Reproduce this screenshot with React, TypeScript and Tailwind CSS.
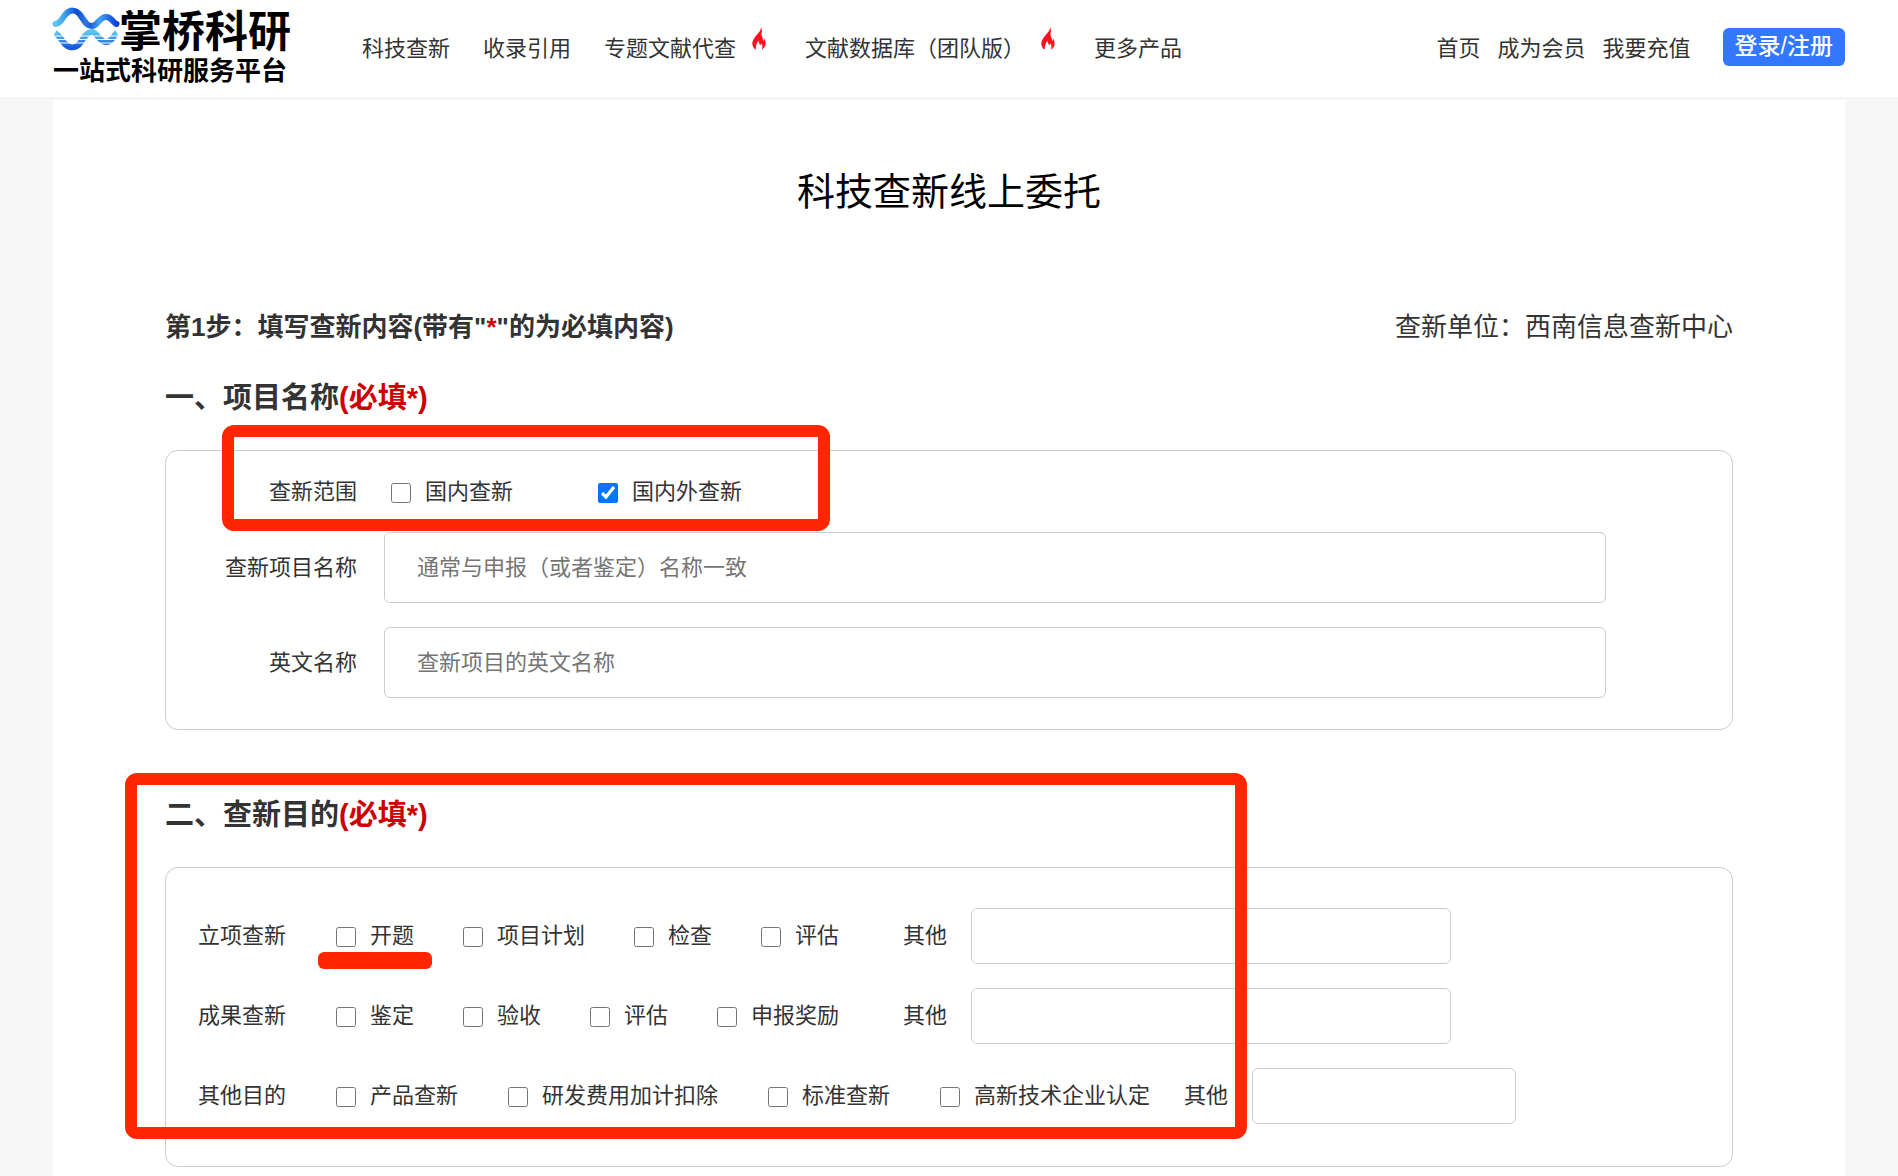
import { useState } from "react";

interface CheckItemProps {
	readonly label: string;
	readonly defaultChecked?: boolean;
	readonly highlighted?: boolean;
}

interface PurposeRow {
	readonly title: string;
	readonly options: Array<string>;
	readonly highlighted?: string;
	readonly compact?: boolean;
}

const navItems = [
	{ label: "科技查新", hot: false },
	{ label: "收录引用", hot: false },
	{ label: "专题文献代查", hot: true },
	{ label: "文献数据库（团队版）", hot: true },
	{ label: "更多产品", hot: false },
];

const purposeRows: Array<PurposeRow> = [
	{ title: "立项查新", options: ["开题", "项目计划", "检查", "评估"], highlighted: "开题" },
	{ title: "成果查新", options: ["鉴定", "验收", "评估", "申报奖励"] },
	{ title: "其他目的", options: ["产品查新", "研发费用加计扣除", "标准查新", "高新技术企业认定"], compact: true },
];

const Flame: React.FC = () => (
	<svg
		viewBox="0 0 14 23"
		className="h-[23px] w-3.5"
		aria-hidden="true"
	>
		<path
			d="M9 0C9.4 4 5 7 2.400 11C1 13 .2 15 .3 17C.5 19.600 1.800 21.500 4 22.600C3.500 20 4.200 17 6.400 13.600C6.600 15.800 7.600 16.600 8 18.200C9 17.600 9.500 17 9.600 16.200C10.800 18.400 10.600 20.600 9.800 22.600C12.400 21.200 13.800 19 13.600 16C13.500 14 12.800 12.800 12.200 11.200C12 13 11.700 13.600 11 14C11.400 10.500 9 9.500 9.600 6.500C9.900 4.500 10.200 2 9 0Z"
			fill="#ff1020"
		/>
	</svg>
);

const LogoMark: React.FC = () => (
	<svg
		viewBox="0 0 66 46"
		className="h-[46px] w-[66px] overflow-visible"
		aria-hidden="true"
	>
		<defs>
			<linearGradient id="wave-top" x1="0" y1="0" x2="1" y2="0">
				<stop offset="0" stopColor="#5ccaf2" />
				<stop offset="0.15" stopColor="#3f9fec" />
				<stop offset="0.35" stopColor="#0b4ad6" />
				<stop offset="0.48" stopColor="#2a74e4" />
				<stop offset="0.58" stopColor="#1c62dc" />
				<stop offset="0.72" stopColor="#45a5ee" />
				<stop offset="1" stopColor="#0a3fd8" />
			</linearGradient>
			<linearGradient id="wave-bottom" x1="0" y1="0" x2="0" y2="1">
				<stop offset="0" stopColor="#5cc8f0" />
				<stop offset="1" stopColor="#1558dc" />
			</linearGradient>
		</defs>
		<path
			d="M2 25C6 27 8 31 11 35C16 41 23 41 28 34C31 29 34 24 39 24C44 24 46 34 53 34C60 34 60 27 64 25"
			fill="none"
			stroke="url(#wave-bottom)"
			strokeWidth="6"
		/>
		<path
			d="M-2 28H68M-2 31.500H68M-2 35H68"
			stroke="#fff"
			strokeWidth="1.200"
		/>
		<path
			d="M2.500 16C8 15 9 10 12 7C17 1 23 1 28 8C32 14 34 18 39 18C45 18 46 9 53 9C59 9 60 15 63.500 16"
			fill="none"
			stroke="url(#wave-top)"
			strokeWidth="6"
			strokeLinecap="round"
		/>
	</svg>
);

const CheckItem: React.FC<CheckItemProps> = ({ label, defaultChecked = false, highlighted = false }) => {
	const [checked, setChecked] = useState(defaultChecked);

	return (
		<label className="relative flex items-center gap-3.5 whitespace-nowrap">
			<input
				type="checkbox"
				checked={checked}
				onChange={(event) => setChecked(event.target.checked)}
				className="mt-0.5 size-5"
			/>
			{label}
			{highlighted && <span className="absolute -inset-x-[18px] top-8 h-[17px] rounded-md bg-[#ff2600]" />}
		</label>
	);
};

const SectionTitle: React.FC<{ readonly children: string }> = ({ children }) => (
	<h2 className="text-[29px] leading-10 font-bold">
		{children}
		<span className="text-[#cc0000]">(必填*)</span>
	</h2>
);

const App: React.FC = () => (
	<div className="flex min-h-screen flex-col bg-[#f7f7f7] font-['Liberation_Sans','Noto_Sans_CJK_SC',sans-serif] text-[22px] leading-8 text-[#333]">
		<header className="flex h-[100px] items-start border-b-[3px] border-[#f5f5f5] bg-white px-[53px] whitespace-nowrap">
			<a
				href="#"
				className="flex w-[309px] flex-col pt-2 font-bold text-black"
			>
				<span className="flex h-12 items-start">
					<LogoMark />
					<span className="text-[43px] leading-[48px]">掌桥科研</span>
				</span>
				<span className="text-[26px] leading-[30px]">一站式科研服务平台</span>
			</a>
			<nav className="flex flex-1 gap-[33px] pt-[33px]">
				{navItems.map((item) => (
					<a
						key={item.label}
						href="#"
						className="flex gap-4"
					>
						{item.label}
						{item.hot && (
							<span className="-mt-1.5 pr-1.5">
								<Flame />
							</span>
						)}
					</a>
				))}
			</nav>
			<div className="flex gap-[17px] pt-[33px]">
				<a href="#">首页</a>
				<a href="#">成为会员</a>
				<a href="#">我要充值</a>
			</div>
			<button
				type="button"
				className="mt-7 ml-8 h-[38px] rounded-md bg-[#3377ff] px-3 pb-0.5 text-[23px] font-medium text-white"
			>
				登录/注册
			</button>
		</header>

		<main className="mx-[53px] flex-1 bg-white px-28 pb-2.5">
			<h1 className="pt-[67px] text-center text-[38px] leading-[50px] text-black">科技查新线上委托</h1>

			<div className="flex items-center justify-between pt-[90px] text-[26px] leading-10">
				<p className="font-bold">
					第1步：填写查新内容(带有"<span className="text-[#cc0000]">*</span>"的为必填内容)
				</p>
				<p>查新单位：西南信息查新中心</p>
			</div>

			<section className="relative pt-[31px]">
				<SectionTitle>一、项目名称</SectionTitle>
				<div className="mt-8 rounded-[13px] border border-[#ccc] pt-6 pr-[126px] pb-[31px]">
					<div className="flex h-[34px] items-center">
						<span className="w-[191px] text-right">查新范围</span>
						<div className="flex gap-[85px] pl-[34px]">
							<CheckItem label="国内查新" />
							<CheckItem
								label="国内外查新"
								defaultChecked
							/>
						</div>
					</div>
					<div className="flex flex-col gap-6 pt-[23px]">
						<label className="flex items-center">
							<span className="w-[191px] text-right">查新项目名称</span>
							<input
								type="text"
								placeholder="通常与申报（或者鉴定）名称一致"
								className="ml-[27px] h-[71px] flex-1 rounded-md border border-[#ccc] px-8 placeholder:text-[#757575]"
							/>
						</label>
						<label className="flex items-center">
							<span className="w-[191px] text-right">英文名称</span>
							<input
								type="text"
								placeholder="查新项目的英文名称"
								className="ml-[27px] h-[71px] flex-1 rounded-md border border-[#ccc] px-8 placeholder:text-[#757575]"
							/>
						</label>
					</div>
				</div>
				<div className="pointer-events-none absolute top-[78px] left-[57px] h-[106px] w-[608px] rounded-xl border-12 border-[#ff2600]" />
			</section>

			<section className="relative pt-[65px]">
				<SectionTitle>二、查新目的</SectionTitle>
				<div className="mt-8 flex flex-col gap-6 rounded-[13px] border border-[#ccc] px-8 pt-10 pb-[42px]">
					{purposeRows.map((row) => (
						<div
							key={row.title}
							className="flex h-14 items-center"
						>
							<span className="w-[138px]">{row.title}</span>
							<div className={row.compact ? "flex gap-[50px]" : "flex gap-[49px]"}>
								{row.options.map((option) => (
									<CheckItem
										key={option}
										label={option}
										highlighted={option === row.highlighted}
									/>
								))}
							</div>
							<label className={row.compact ? "flex items-center pl-[34px]" : "flex items-center pl-16"}>
								其他
								<input
									type="text"
									className={
										row.compact
											? "ml-6 h-14 w-[264px] rounded-md border border-[#ccc] px-4"
											: "ml-6 h-14 w-[480px] rounded-md border border-[#ccc] px-4"
									}
								/>
							</label>
						</div>
					))}
				</div>
				<div className="pointer-events-none absolute top-[43px] -left-10 h-[366px] w-[1122px] rounded-xl border-12 border-[#ff2600]" />
			</section>
		</main>
	</div>
);

export default App;
